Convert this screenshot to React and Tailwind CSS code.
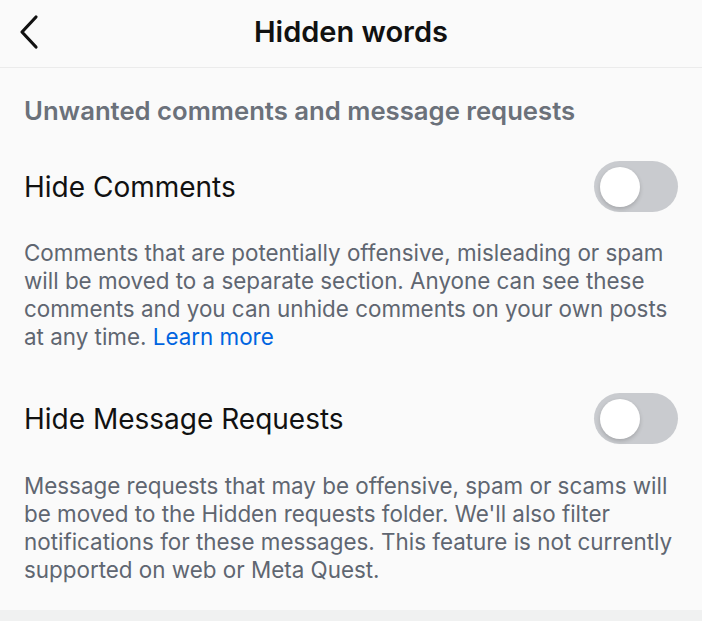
import { useState } from "react";

function Toggle({ on, onChange }) {
  return (
    <button
      onClick={() => onChange(!on)}
      className={`w-[84px] h-[51px] rounded-full p-[6px] flex items-center shrink-0 ${
        on ? "bg-[#0095f6] justify-end" : "bg-[#c9cbcf] justify-start"
      }`}
    >
      <span className="w-[40px] h-[40px] rounded-full bg-white shadow-[0_2px_4px_rgba(0,0,0,0.18)]" />
    </button>
  );
}

function App() {
  const [hideComments, setHideComments] = useState(false);
  const [hideRequests, setHideRequests] = useState(false);

  return (
    <div className="w-[702px] h-[621px] bg-[#fafafa] flex flex-col overflow-hidden font-['Inter','Liberation_Sans',sans-serif]">
      <div className="h-[68px] pb-[4px] border-b border-[#ebebeb] flex items-center relative shrink-0">
        <button className="ml-[14px] w-[30px] h-[40px] flex items-center justify-center">
          <svg width="22" height="36" viewBox="0 0 22 36" fill="none">
            <path
              d="M18 3 L4 18 L18 33"
              stroke="#111"
              strokeWidth="3.2"
              strokeLinecap="round"
              strokeLinejoin="round"
            />
          </svg>
        </button>
        <h1 className="absolute left-0 right-0 text-center text-[29px] font-semibold text-[#111] pointer-events-none">
          Hidden words
        </h1>
      </div>

      <div className="flex-1 pl-6 pr-6">
        <h2 className="mt-[27px] text-[25.7px] font-semibold text-[#6b717a] leading-[32px] whitespace-nowrap">
          Unwanted comments and message requests
        </h2>

        <div className="mt-[34px] flex items-center justify-between">
          <span className="text-[28px] text-[#111] leading-[34px]">Hide Comments</span>
          <Toggle on={hideComments} onChange={setHideComments} />
        </div>
        <p className="mt-[27px] text-[22.4px] leading-[28px] text-[#5f6671] -mr-2">
          Comments that are potentially offensive, misleading or spam will be moved to a
          separate section. Anyone can see these comments and you can unhide comments on
          your own posts at any time.{" "}
          <span className="text-[#0064e0]">Learn more</span>
        </p>

        <div className="mt-[42px] flex items-center justify-between">
          <span className="text-[28px] text-[#111] leading-[34px]">Hide Message Requests</span>
          <Toggle on={hideRequests} onChange={setHideRequests} />
        </div>
        <p className="mt-[28px] text-[22.4px] leading-[28px] text-[#5f6671] -mr-2">
          Message requests that may be offensive, spam or scams will be moved to the Hidden
          requests folder. We'll also filter notifications for these messages. This feature
          is not currently supported on web or Meta Quest.
        </p>
      </div>

      <div className="h-[11px] bg-[#f0f1f1] shrink-0" />
    </div>
  );
}

export default App;
